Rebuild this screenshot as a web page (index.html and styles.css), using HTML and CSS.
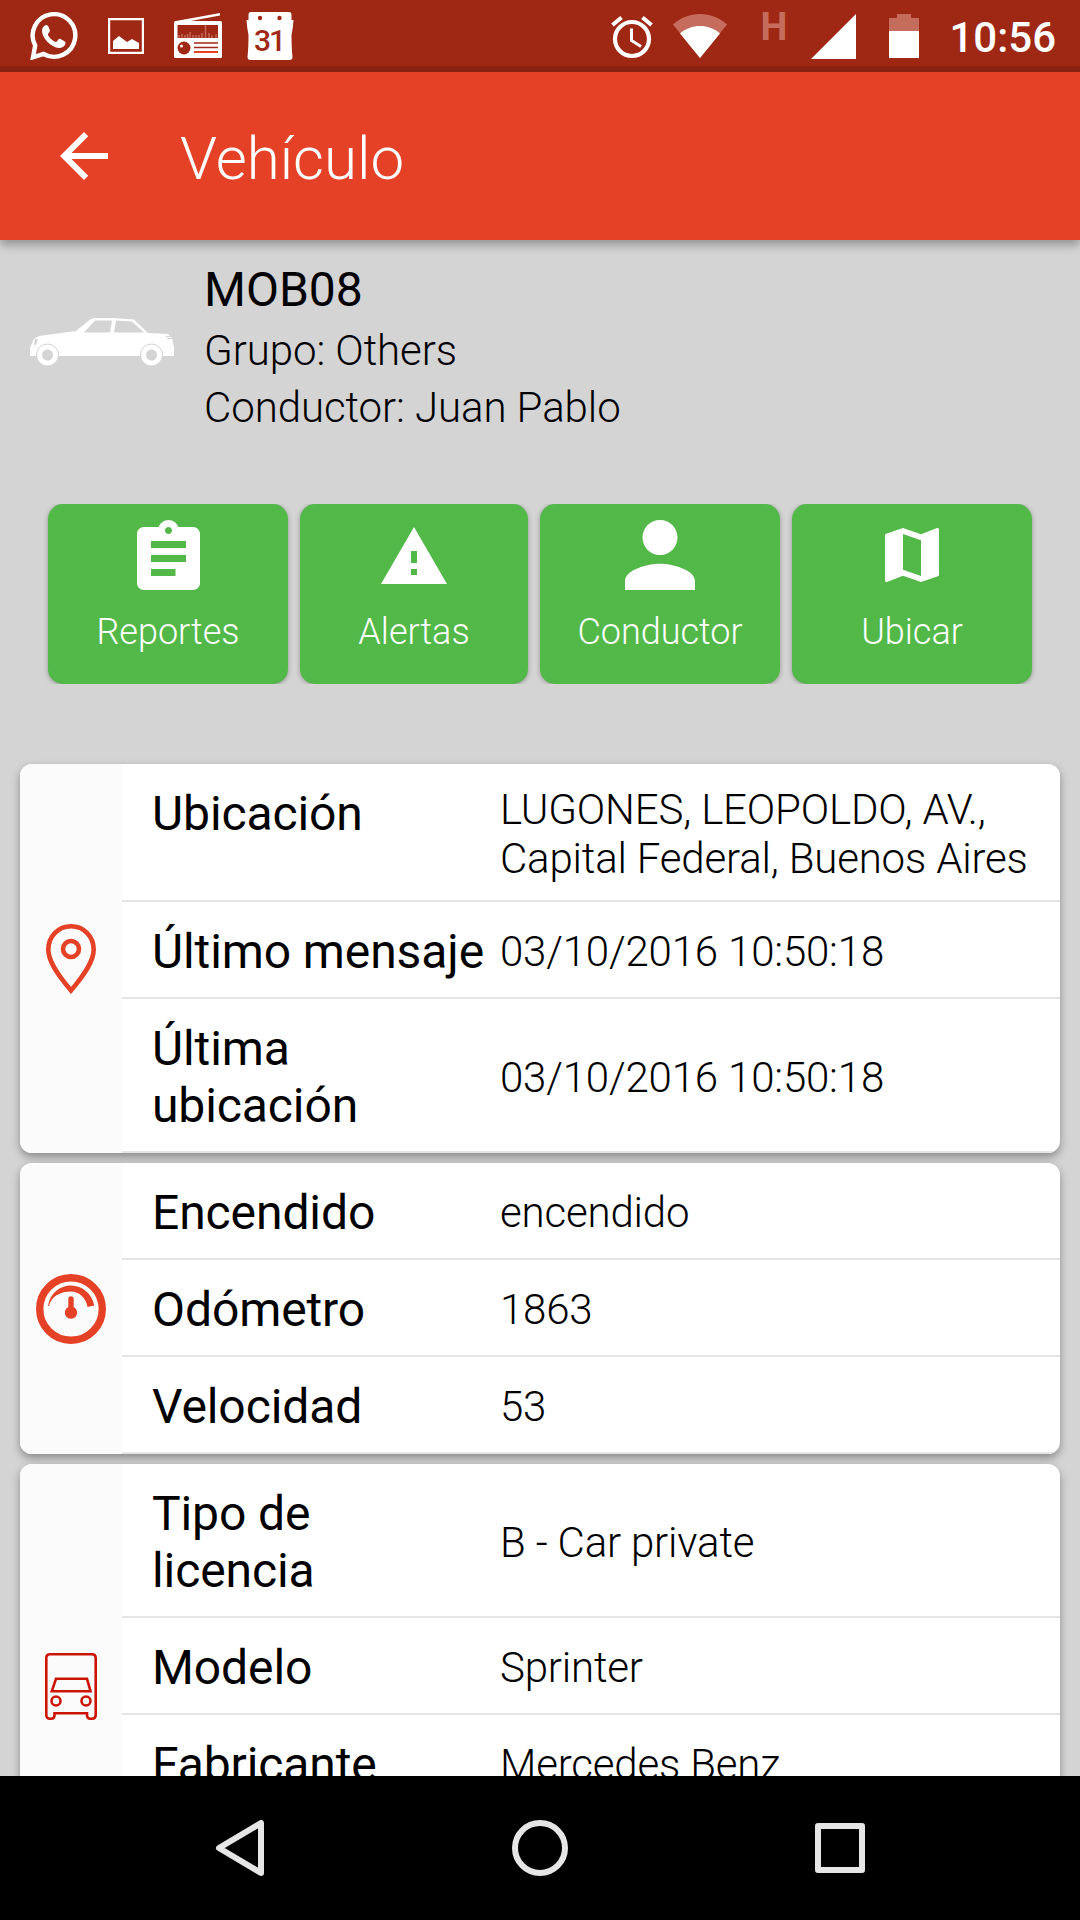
FILE: index.html
```html
<!doctype html>
<html lang="es">
  <head>
    <meta charset="UTF-8" />
    <meta name="viewport" content="width=device-width, initial-scale=1.0" />
    <title>Vehículo</title>
    <link rel="stylesheet" href="styles.css">
  </head>
  <body>
    <div class="status-bar">
      <div class="status-left">
        <svg width="48" height="48" viewBox="0 0 48 48">
          <path fill="none" stroke="#fff" stroke-width="4.400" d="M3 45.300L5.200 33.500A21.300 21.300 0 1 1 13.500 42z" />
          <path fill="#fff" d="M16.500 13c-2 0-4.500 2.500-4.500 6 0 7 9 16.500 17 17 4 0 6.500-2.500 6.500-5.500 0-1-5-3.800-6-3.800-1.200 0-2.500 3.300-3.600 3.300-2 0-8-5.500-8-7.500 0-1 2-2.500 2-3.700 0-1-1.700-5.800-3.400-5.800z" />
        </svg>
        <svg width="36" height="36" viewBox="0 0 36 36">
          <path fill="none" stroke="#fff" stroke-width="2.200" d="M1.100 1.100h33.800v33.800H1.100z" />
          <path fill="#fff" d="M5 31v-8l6-5 8 6 5-3 7 4v6z" />
        </svg>
        <svg width="48" height="46" viewBox="0 0 48 46">
          <path fill="#fff" d="M2 8L46 0v2.500L14 8.500z" />
          <rect y="8" width="48" height="37" rx="1.500" fill="#fff" />
          <path fill="#9f2815" d="M3.500 12h40.500v13H3.500z" />
          <path stroke="#c66c5c" stroke-width="1.400" d="M5 25v-3M8 25v-4M11 25v-3M13.500 25v-4M16 25v-6M19 25v-3M22 25v-3M25 25v-3M28 25v-5M35 25v-5M38 25v-3M42 25v-4M31.500 12v13" />
          <circle cx="10" cy="35" r="6.500" fill="#9f2815" />
          <circle cx="7.500" cy="33" r="1.500" fill="#fff" />
          <path stroke="#9f2815" stroke-width="1.500" d="M20 30h24M20 34.500h24" />
          <path stroke="#e54127" stroke-width="2" d="M20 39h24" />
        </svg>
        <svg class="calendar" width="48" height="48" viewBox="0 0 48 48">
          <path fill="#fff" d="M5 0h38q2.500 0 2.500 3v5H47.500q-.5 8-2 15 0 13 1 22 0 3-3 3h-39q-3 0-3-3 1-9 1-22-1.500-7-2-15H2.500V3Q2.500 0 5 0z" />
          <circle cx="14" cy="6" r="2.200" fill="#9f2815" />
          <circle cx="33.500" cy="6" r="2.200" fill="#9f2815" />
          <text x="23" y="38.500">31</text>
        </svg>
      </div>
      <div class="status-right">
        <svg class="alarm" width="42" height="44" viewBox="0 0 42 44">
          <g fill="none" stroke="#fff">
            <circle cx="21" cy="24" r="17" stroke-width="4.200" />
            <path stroke-width="4" d="M1.500 10L10.500 2.500M31.500 2.500L40.500 10" />
            <path stroke-width="3" d="M20.500 13.500v12l9.500 6" />
          </g>
        </svg>
        <svg class="wifi" width="54" height="44" viewBox="0 0 54 44">
          <path fill="#c66c5c" d="M0 10.500C15-3.500 39-3.500 54 10.500L27 44z" />
          <path fill="#fff" d="M7 19.500C18 9.500 36 9.500 47 19.500L27 44z" />
        </svg>
        <span class="network">H</span>
        <svg class="signal" width="45" height="45" viewBox="0 0 45 45">
          <path fill="#fff" d="M45 0v45H0z" />
        </svg>
        <svg class="battery" width="30" height="44" viewBox="0 0 30 44">
          <path fill="#c66c5c" d="M8 0h14v4h8v14H0V4h8z" />
          <path fill="#fff" d="M0 17h30v27H0z" />
        </svg>
        <span class="clock">10:56</span>
      </div>
    </div>

    <header class="toolbar">
      <svg width="72" height="72" viewBox="0 0 24 24">
        <path fill="#fff" d="M20 11H7.830l5.590-5.590L12 4l-8 8 8 8 1.410-1.410L7.830 13H20v-2z" />
      </svg>
      <h1>Vehículo</h1>
    </header>

    <main class="content">
      <section class="vehicle">
        <svg width="144" height="48" viewBox="0 0 144 48">
          <path fill="#fff" fill-rule="evenodd" d="M0 30l4-9 5-3 37-5L60 1.500l4-1.500h18l22 1.500L118 15l20 1 4 4 2 9v9H0zM54 14.500h26L82 2.500H65zM84 14.500h30L102 3.500 86 2.500z" />
          <g fill="#fff" stroke="#d4d4d4">
            <circle cx="17.500" cy="37" r="11" />
            <circle cx="121.500" cy="37" r="11" />
          </g>
          <g fill="#d4d4d4">
            <circle cx="17.500" cy="37" r="5.500" />
            <circle cx="121.500" cy="37" r="5.500" />
            <path d="M5 21h3l-2 6H4zM136 18h5v1h-5zM137 20h5v1h-5z" />
          </g>
        </svg>
        <div class="vehicle-info">
          <h2>MOB08</h2>
          <p>Grupo: Others</p>
          <p>Conductor: Juan Pablo</p>
        </div>
      </section>

      <nav class="actions">
        <button class="action">
          <svg width="63" height="70" viewBox="3 1 18 20">
            <path d="M19 3h-4.180C14.400 1.840 13.300 1 12 1c-1.300 0-2.400.84-2.820 2H5c-1.100 0-2 .9-2 2v14c0 1.100.9 2 2 2h14c1.100 0 2-.9 2-2V5c0-1.100-.9-2-2-2zm-7 0c.55 0 1 .45 1 1s-.45 1-1 1-1-.45-1-1 .45-1 1-1zm2 14H7v-2h7v2zm3-4H7v-2h10v2zm0-4H7V7h10v2z" />
          </svg>
          <span>Reportes</span>
        </button>
        <button class="action action-small">
          <svg width="66" height="57" viewBox="1 2 22 19">
            <path d="M1 21h22L12 2 1 21zm12-3h-2v-2h2v2zm0-4h-2v-4h2v4z" />
          </svg>
          <span>Alertas</span>
        </button>
        <button class="action">
          <svg width="70" height="70" viewBox="4 4 16 16">
            <path d="M12 12c2.210 0 4-1.790 4-4s-1.790-4-4-4-4 1.790-4 4 1.790 4 4 4zm0 2c-2.670 0-8 1.340-8 4v2h16v-2c0-2.660-5.330-4-8-4z" />
          </svg>
          <span>Conductor</span>
        </button>
        <button class="action">
          <svg width="54" height="54" viewBox="3 3 18 18">
            <path d="M20.500 3l-.16.030L15 5.100 9 3 3.360 4.900c-.21.070-.36.250-.36.480V20.500c0 .28.220.5.500.5l.16-.030L9 18.900l6 2.100 5.640-1.900c.21-.070.36-.250.36-.480V3.500c0-.28-.22-.5-.5-.5zM15 19l-6-2.110V5l6 2.110V19z" />
          </svg>
          <span>Ubicar</span>
        </button>
      </nav>

      <section class="card">
        <div class="card-icon">
          <svg width="50" height="70" viewBox="0 0 50 70">
            <g fill="none" stroke="#e54127" stroke-width="4.600">
              <path d="M25 2.300C12 2.300 2.300 12.500 2.300 25.500 2.300 37 11 50 25 66.500 39 50 47.700 37 47.700 25.500 47.700 12.500 38 2.300 25 2.300z" />
              <circle cx="25" cy="25" r="8" />
            </g>
          </svg>
        </div>
        <dl class="rows">
          <div class="row row-top">
            <dt>Ubicación</dt>
            <dd>LUGONES, LEOPOLDO, AV., Capital Federal, Buenos Aires</dd>
          </div>
          <div class="row">
            <dt>Último mensaje</dt>
            <dd>03/10/2016 10:50:18</dd>
          </div>
          <div class="row">
            <dt>Última<br>ubicación</dt>
            <dd>03/10/2016 10:50:18</dd>
          </div>
        </dl>
      </section>

      <section class="card">
        <div class="card-icon">
          <svg width="70" height="70" viewBox="0 0 70 70">
            <circle cx="35" cy="35" r="31.300" fill="none" stroke="#e54127" stroke-width="7.400" />
            <g fill="#e54127">
              <path d="M12 32C14 19 24 11.500 35 11.500c11.500 0 21 8.500 23.300 20l-6.800 1.500C50 24 43.500 17.500 35 17.500 25 17.500 15 22 13 32z" />
              <path d="M32.300 33v-8a2.700 2.700 0 0 1 5.400 0v8a6.200 6.200 0 1 1-5.400 0z" />
            </g>
          </svg>
        </div>
        <dl class="rows">
          <div class="row">
            <dt>Encendido</dt>
            <dd>encendido</dd>
          </div>
          <div class="row">
            <dt>Odómetro</dt>
            <dd>1863</dd>
          </div>
          <div class="row">
            <dt>Velocidad</dt>
            <dd>53</dd>
          </div>
        </dl>
      </section>

      <section class="card card-license">
        <div class="card-icon">
          <svg width="52" height="67" viewBox="0 0 52 67">
            <g fill="none" stroke="#cc1405" stroke-width="2.600">
              <path d="M1.300 5q0-3.700 3.700-3.700h42q3.700 0 3.700 3.700v57q0 3.700-3.700 3.700h-1.500q-3.500 0-3.500-3.500V60.300H9.500v1.900q0 3.500-3.500 3.500H5q-3.700 0-3.700-3.700z" />
              <path d="M11 25.800h31L45.500 38.200H6.800z" />
              <circle cx="11" cy="48" r="4.500" />
              <circle cx="41" cy="48" r="4.500" />
            </g>
          </svg>
        </div>
        <dl class="rows">
          <div class="row">
            <dt>Tipo de<br>licencia</dt>
            <dd>B - Car private</dd>
          </div>
          <div class="row">
            <dt>Modelo</dt>
            <dd>Sprinter</dd>
          </div>
          <div class="row">
            <dt>Fabricante</dt>
            <dd>Mercedes Benz</dd>
          </div>
        </dl>
      </section>
    </main>

    <div class="nav-bar">
      <svg width="56" height="56" viewBox="0 0 56 56">
        <path d="M49 3v50L7 28z" />
      </svg>
      <svg width="56" height="56" viewBox="0 0 56 56">
        <circle cx="28" cy="28" r="25" />
      </svg>
      <svg width="56" height="56" viewBox="0 0 56 56">
        <rect x="6" y="6" width="44" height="44" />
      </svg>
    </div>
  </body>
</html>
```

FILE: styles.css
```css
* {
  box-sizing: border-box;
}

body {
  margin: 0;
  width: 1080px;
  height: 1920px;
  overflow: hidden;
  display: flex;
  flex-direction: column;
  font-family: Roboto, sans-serif;
  font-weight: 300;
  color: #000;
  background: #d4d4d4;
}

h1,
h2,
p,
dl,
dt,
dd {
  margin: 0;
}

svg {
  display: block;
  flex: none;
}

.status-bar {
  height: 72px;
  flex: none;
  display: flex;
  justify-content: space-between;
  align-items: flex-start;
  padding: 12px 24px 0 30px;
  background: #9f2815;
  border-bottom: 6px solid #8a2312;
}

.status-left {
  display: flex;
  align-items: center;
  gap: 30px;
  height: 48px;
}

.calendar {
  margin-left: -6px;
}

.calendar text {
  fill: #9f2815;
  font-size: 30px;
  font-weight: 500;
  letter-spacing: -2px;
  text-anchor: middle;
}

.status-right {
  display: flex;
  align-items: flex-start;
  height: 48px;
}

.alarm {
  margin-top: 3px;
}

.wifi {
  margin: 2px 0 0 20px;
}

.network {
  margin: 2px 0 0 33px;
  width: 27px;
  color: #c66c5c;
  font-size: 38px;
  font-weight: 700;
  line-height: 27px;
}

.signal {
  margin: 2px 0 0 24px;
}

.battery {
  margin: 2px 0 0 33px;
}

.clock {
  margin-left: 30px;
  color: #fff;
  font-size: 42px;
  font-weight: 500;
  line-height: 51px;
}

.toolbar {
  position: relative;
  z-index: 1;
  height: 168px;
  flex: none;
  display: flex;
  align-items: center;
  gap: 60px;
  padding-left: 48px;
  background: #e54127;
  box-shadow: 0 5px 9px rgba(0, 0, 0, 0.3);
}

.toolbar h1 {
  color: #fff;
  font-size: 60px;
  font-weight: 300;
  line-height: 70px;
  padding-top: 6px;
}

.content {
  flex: 1;
  min-height: 0;
  overflow: hidden;
}

.vehicle {
  height: 264px;
  display: flex;
  align-items: flex-start;
  gap: 30px;
  padding: 21px 30px 0;
}

.vehicle svg {
  margin-top: 57px;
}

.vehicle h2 {
  margin-bottom: 4px;
  font-size: 48px;
  font-weight: 400;
  line-height: 57px;
}

.vehicle p {
  font-size: 42px;
  line-height: 57px;
  letter-spacing: -0.080px;
}

.actions {
  display: flex;
  gap: 12px;
  padding: 0 48px;
  margin-bottom: 80px;
  overflow-y: clip;
}

.action {
  width: 240px;
  height: 180px;
  flex: none;
  display: grid;
  grid-template-rows: 102px 52px;
  align-content: start;
  place-items: center;
  padding: 0;
  border: none;
  border-radius: 15px;
  background: #52b848;
  box-shadow: 0 1px 5px rgba(0, 0, 0, 0.3);
  color: #fff;
  font-family: inherit;
  font-size: 36px;
  font-weight: 300;
}

.action-small {
  width: 228px;
}

.action svg {
  fill: #fff;
}

.card {
  display: flex;
  margin: 0 20px 10px;
  border-radius: 12px;
  overflow: hidden;
  background: #fff;
  box-shadow: 0 4px 8px rgba(0, 0, 0, 0.35);
}

.card-icon {
  width: 102px;
  flex: none;
  display: flex;
  align-items: center;
  justify-content: center;
  background: #fbfbfb;
}

.card-license {
  height: 445px;
}

.rows {
  flex: 1;
}

.row {
  display: flex;
  align-items: center;
  padding: 21px 20px 17px 30px;
  border-bottom: 2px solid #e5e5e5;
}

.row-top {
  align-items: flex-start;
}

.row dt {
  width: 348px;
  flex: none;
  font-size: 48px;
  font-weight: 400;
  line-height: 57px;
  letter-spacing: -0.100px;
}

.row dd {
  font-size: 42px;
  line-height: 49px;
  letter-spacing: -0.180px;
}

.nav-bar {
  height: 144px;
  flex: none;
  display: flex;
  align-items: center;
  justify-content: center;
  gap: 244px;
  background: #000;
}

.nav-bar svg {
  fill: none;
  stroke: #e6e6e6;
  stroke-width: 6px;
  stroke-linejoin: round;
}
```
